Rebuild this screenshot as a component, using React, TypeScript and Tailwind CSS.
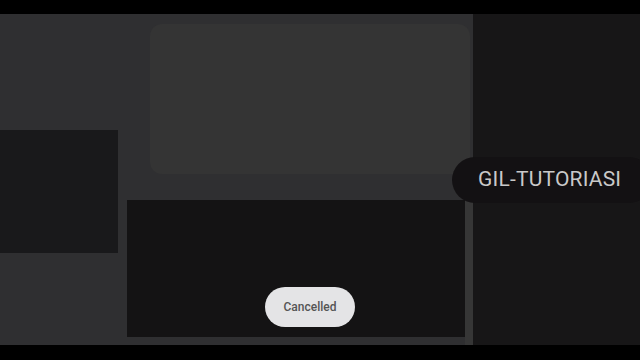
export default function App() {
  return (
    <div className="relative w-[640px] h-[360px] overflow-hidden bg-black font-['Roboto',sans-serif]">
      <div className="h-[14px] bg-black" />
      <div className="flex h-[331px]">
        <div className="relative w-[473px] bg-[#2f2f31] flex flex-col">
          <div className="absolute left-[150px] top-[10px] w-[320px] h-[150px] rounded-xl bg-[#343434]" />
          <div className="h-[116px]" />
          <div className="relative flex items-start">
            <div className="w-[118px] h-[123px] bg-[#19191b]" />
            <div className="ml-[9px] mt-[70px] w-[338px] h-[137px] bg-[#141314]" />
            <div className="mt-[70px] w-[8px] h-[145px] bg-[#363636]" />
          </div>
        </div>
        <div className="w-[167px] bg-[#171617]" />
      </div>
      <div className="h-[15px] bg-black" />

      <div className="absolute left-[452px] top-[157px] w-[200px] h-[46px] rounded-full bg-[#131113] flex items-center pl-[26px]">
        <span className="text-[21px] text-[#c9c9c9] tracking-[0.2px]">GIL-TUTORIASI</span>
      </div>

      <div className="absolute left-[265px] top-[287px] w-[90px] h-[40px] rounded-full bg-[#e4e4e6] flex items-center justify-center">
        <span className="text-[12px] font-medium text-[#555]">Cancelled</span>
      </div>
    </div>
  )
}
